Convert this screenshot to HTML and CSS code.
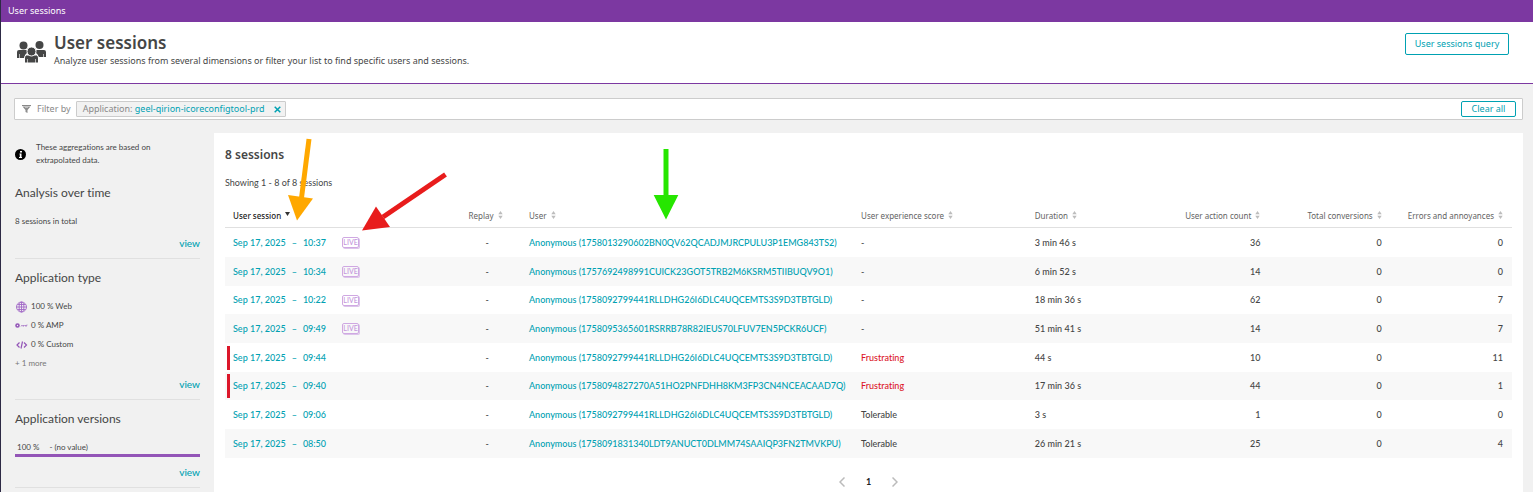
FILE: index.html
```html
<!DOCTYPE html>
<html lang="en">
<head>
<meta charset="utf-8">
<title>User sessions</title>
<link rel="stylesheet" href="styles.css">
</head>
<body>
<svg class="defs" aria-hidden="true">
  <symbol id="sort" viewBox="0 0 5 8"><path d="M2.500 0 4.700 3.200H.3zM2.500 8 .3 4.800h4.400z" fill="#bdbdbd"/></symbol>
</svg>
<nav class="crumbs"><span>User sessions</span></nav>
<header class="header">
  <svg class="people" viewBox="0 0 30 22" aria-hidden="true"><g fill="#454646"><circle cx="6.500" cy="4.500" r="4"/><circle cx="22.500" cy="4" r="4"/><path d="M0 17v-6q0-2 2-2h7q1 0 1 1v2q-2 1-2 3v2zM29 16v-5q0-2-2-2h-7q-1 0-1 1v2q2 1 2 3v1z"/><path d="M7.500 22v-5q0-3 2-3h10q2 0 2 3v5z" stroke="#fff"/><circle cx="14.500" cy="10.500" r="4.500" stroke="#fff"/></g><path d="M2.500 13v4M26.500 13v4M10.500 18v4M18.500 18v4" stroke="#fff" stroke-width=".6"/></svg>
  <div class="titles">
    <h1>User sessions</h1>
    <p>Analyze user sessions from several dimensions or filter your list to find specific users and sessions.</p>
  </div>
  <button class="btn btn-query" type="button">User sessions query</button>
</header>
<div class="filter">
  <svg class="funnel" viewBox="0 0 9 8" aria-hidden="true"><path d="M0 .5h9" stroke="#888"/><path d="M.5 1.500h8L5.500 5v3l-2-1V5z" fill="#8c8c8c"/><path d="M3 2.500h3" stroke="#ccc" stroke-width=".8"/></svg>
  <span class="filter-label">Filter by</span>
  <span class="chip"><span>Application: <b>geel-qirion-icoreconfigtool-prd</b></span>
    <button type="button" class="chip-close" aria-label="Remove filter"><svg viewBox="0 0 7 7"><path d="m.7.7 5.600 5.600M6.300.7.7 6.300" stroke="#00a1b2" stroke-width="1.500"/></svg></button></span>
  <button class="btn btn-clear" type="button">Clear all</button>
</div>
<main class="main">
  <aside class="side">
    <div class="note">
      <svg viewBox="0 0 11 11" aria-hidden="true"><circle cx="5.500" cy="5.500" r="5.500"/><path d="M5 2h2v1.500H5zM4.500 4.500h2V8H7v1H4V8h.8V5.500h-.3z" fill="#fff"/></svg>
      <p>These aggregations are based on extrapolated data.</p>
    </div>
    <section class="facet">
      <h2>Analysis over time</h2>
      <p class="total">8 sessions in total</p>
      <a class="view" href="#">view</a>
    </section>
    <section class="facet">
      <h2>Application type</h2>
      <ul class="types">
        <li><svg viewBox="0 0 12 12" aria-hidden="true"><g fill="none" stroke="#a169c6" stroke-width=".9"><circle cx="6.500" cy="6" r="5"/><ellipse cx="6.500" cy="6" rx="2.400" ry="5"/><path d="M6.500 1v10M1.500 6h10M2.500 3.500h8M2.500 8.500h8"/></g></svg>100 % Web</li>
        <li><svg viewBox="0 0 12 12" aria-hidden="true"><circle cx="2.500" cy="5.500" r="1.500" fill="none" stroke="#9355b7" stroke-width="1.600"/><path d="M6 6.500 7 5l1 1.500M8.500 6.500V5l1 1 1-1v1.500M11.500 6.500V5h1" fill="none" stroke="#a878c8" stroke-width=".8"/></svg>0 % AMP</li>
        <li><svg viewBox="0 0 12 12" aria-hidden="true"><path d="M4.500 3.500 2 6l2.500 2.500M9 3.500 11.500 6 9 8.500M7.500 2.500l-1.500 7" fill="none" stroke="#9355b7" stroke-width="1.200"/></svg>0 % Custom</li>
      </ul>
      <p class="more">+ 1 more</p>
      <a class="view" href="#">view</a>
    </section>
    <section class="facet">
      <h2>Application versions</h2>
      <p class="version"><span>100 %</span><span>- (no value)</span></p>
      <a class="view" href="#">view</a>
    </section>
  </aside>
  <section class="card">
    <h2>8 sessions</h2>
    <p class="showing">Showing 1 - 8 of 8 sessions</p>
    <table>
      <colgroup><col class="c-session"><col class="c-replay"><col class="c-user"><col class="c-score"><col class="c-num"><col class="c-num"><col class="c-num"><col class="c-num"></colgroup>
      <thead><tr>
        <th class="sorted">User session<svg class="sort" viewBox="0 0 5 8"><path d="M0 1h5L2.500 5z" fill="#333"/></svg></th>
        <th>Replay<svg class="sort"><use href="#sort"/></svg></th>
        <th>User<svg class="sort"><use href="#sort"/></svg></th>
        <th>User experience score<svg class="sort"><use href="#sort"/></svg></th>
        <th>Duration<svg class="sort"><use href="#sort"/></svg></th>
        <th class="num">User action count<svg class="sort"><use href="#sort"/></svg></th>
        <th class="num">Total conversions<svg class="sort"><use href="#sort"/></svg></th>
        <th class="num">Errors and annoyances<svg class="sort"><use href="#sort"/></svg></th>
      </tr></thead>
      <tbody>
        <tr><td><div class="session"><a class="when" href="#"><span>Sep 17, 2025</span><span>–</span><span>10:37</span></a><span class="live">LIVE</span></div></td><td class="replay">-</td><td><a href="#">Anonymous (1758013290602BN0QV62QCADJMJRCPULU3P1EMG843TS2)</a></td><td>-</td><td>3 min 46 s</td><td class="num">36</td><td class="num">0</td><td class="num">0</td></tr>
        <tr><td><div class="session"><a class="when" href="#"><span>Sep 17, 2025</span><span>–</span><span>10:34</span></a><span class="live">LIVE</span></div></td><td class="replay">-</td><td><a href="#">Anonymous (1757692498991CUICK23GOT5TRB2M6KSRM5TIIBUQV9O1)</a></td><td>-</td><td>6 min 52 s</td><td class="num">14</td><td class="num">0</td><td class="num">0</td></tr>
        <tr><td><div class="session"><a class="when" href="#"><span>Sep 17, 2025</span><span>–</span><span>10:22</span></a><span class="live">LIVE</span></div></td><td class="replay">-</td><td><a href="#">Anonymous (1758092799441RLLDHG26I6DLC4UQCEMTS3S9D3TBTGLD)</a></td><td>-</td><td>18 min 36 s</td><td class="num">62</td><td class="num">0</td><td class="num">7</td></tr>
        <tr><td><div class="session"><a class="when" href="#"><span>Sep 17, 2025</span><span>–</span><span>09:49</span></a><span class="live">LIVE</span></div></td><td class="replay">-</td><td><a href="#">Anonymous (1758095365601RSRRB78R82IEUS70LFUV7EN5PCKR6UCF)</a></td><td>-</td><td>51 min 41 s</td><td class="num">14</td><td class="num">0</td><td class="num">7</td></tr>
        <tr class="bad"><td><div class="session"><a class="when" href="#"><span>Sep 17, 2025</span><span>–</span><span>09:44</span></a></div></td><td class="replay">-</td><td><a href="#">Anonymous (1758092799441RLLDHG26I6DLC4UQCEMTS3S9D3TBTGLD)</a></td><td class="frustrating">Frustrating</td><td>44 s</td><td class="num">10</td><td class="num">0</td><td class="num">11</td></tr>
        <tr class="bad"><td><div class="session"><a class="when" href="#"><span>Sep 17, 2025</span><span>–</span><span>09:40</span></a></div></td><td class="replay">-</td><td><a href="#">Anonymous (1758094827270A51HO2PNFDHH8KM3FP3CN4NCEACAAD7Q)</a></td><td class="frustrating">Frustrating</td><td>17 min 36 s</td><td class="num">44</td><td class="num">0</td><td class="num">1</td></tr>
        <tr><td><div class="session"><a class="when" href="#"><span>Sep 17, 2025</span><span>–</span><span>09:06</span></a></div></td><td class="replay">-</td><td><a href="#">Anonymous (1758092799441RLLDHG26I6DLC4UQCEMTS3S9D3TBTGLD)</a></td><td>Tolerable</td><td>3 s</td><td class="num">1</td><td class="num">0</td><td class="num">0</td></tr>
        <tr><td><div class="session"><a class="when" href="#"><span>Sep 17, 2025</span><span>–</span><span>08:50</span></a></div></td><td class="replay">-</td><td><a href="#">Anonymous (1758091831340LDT9ANUCT0DLMM74SAAIQP3FN2TMVKPU)</a></td><td>Tolerable</td><td>26 min 21 s</td><td class="num">25</td><td class="num">0</td><td class="num">4</td></tr>
      </tbody>
    </table>
    <nav class="pager" aria-label="Pages">
      <button type="button" aria-label="Previous page"><svg viewBox="0 0 6 10"><path d="M5.500.5 1 5l4.500 4.500"/></svg></button>
      <span aria-current="page">1</span>
      <button type="button" aria-label="Next page"><svg viewBox="0 0 6 10"><path d="M.5.500 5 5 .5 9.500"/></svg></button>
    </nav>
  </section>
</main>
<svg class="arrow arrow-orange" viewBox="0 0 30 84" aria-hidden="true"><path d="M22 2 14.500 61" stroke="#ffa800" stroke-width="5"/><path d="m1 58 25 3.500L10 83.500z" fill="#ffa800"/></svg>
<svg class="arrow arrow-red" viewBox="0 0 90 62" aria-hidden="true"><path d="M85.500 4.500 23 47" stroke="#e81c1c" stroke-width="5"/><path d="m16 36.500 14 20.500L2 60.500z" fill="#e81c1c"/></svg>
<svg class="arrow arrow-green" viewBox="0 0 26 72" aria-hidden="true"><path d="M13 1v47" stroke="#26e600" stroke-width="5"/><path d="M.7 47h24.600L13 71.500z" fill="#26e600"/></svg>
</body>
</html>
```
FILE: styles.css
```css
* { box-sizing: border-box; }
body {
  margin: 0;
  min-height: 100vh;
  display: flex;
  flex-direction: column;
  position: relative;
  border-left: 1px solid #2d2a45;
  background: #f1f1f1;
  color: #454646;
  font: 500 9px/12px Lato, "Noto Sans", sans-serif;
  font-variant-ligatures: none;
}
h1, h2, p, ul { margin: 0; padding: 0; font-weight: 400; }
ul { list-style: none; }
a { color: #00a1b2; text-decoration: none; }
svg { flex: none; }
button { font: inherit; padding: 0; border: 0; background: none; cursor: pointer; }
.defs { position: absolute; width: 0; height: 0; }

.crumbs, .header, .filter, .card h2, th { font-family: "Noto Sans", sans-serif; font-weight: 400; }
.crumbs { height: 22px; padding: 0 7px; background: #7c38a1; color: #fff; line-height: 22px; }
.header {
  display: flex;
  align-items: flex-start;
  height: 62px;
  padding: 11px 24px 0 16px;
  background: #fff;
  border-bottom: 1px solid #7c38a1;
}
.people { width: 30px; height: 22px; margin: 8px 7px 0 0; }
.titles { flex: 1; }
.titles h1 { font-size: 17px; line-height: 20px; font-weight: 600; }
.titles p { line-height: 14px; margin-top: 1px; }
.btn { border: 1px solid #00a1b2; border-radius: 2px; background: #fff; color: #00a1b2; }
.btn-query { width: 104px; height: 22px; }
.btn-clear { width: 55px; height: 16px; margin-left: auto; line-height: 14px; }

.filter {
  display: flex;
  align-items: center;
  height: 22px;
  margin: 14px 10px 13px 13px;
  padding: 0 6px 0 7px;
  background: #fff;
  border: 1px solid #ccc;
  border-radius: 1px;
  color: #898989;
}
.funnel { width: 9px; height: 8px; margin-right: 6px; }
.filter-label { margin-right: 5px; }
.chip {
  display: flex;
  align-items: center;
  gap: 10px;
  height: 16px;
  padding: 0 4px 0 6px;
  background: #f2f2f2;
  border: 1px solid #ccc;
  border-radius: 1px;
}
.chip b { color: #00a1b2; font-weight: 400; }
.chip-close { display: flex; }
.chip-close svg { width: 7px; height: 7px; }

.main { display: flex; flex: 1; }
.side { width: 213px; flex: none; padding: 8px 14px 0; }
.note { display: flex; align-items: center; gap: 10px; margin-bottom: 16px; padding-right: 30px; line-height: 13px; }
.note svg { width: 11px; height: 11px; }
.note, .types, .more, .total, .version { font-size: 8px; }
.facet { display: flex; flex-direction: column; padding-bottom: 8px; margin-bottom: 9px; border-bottom: 1px solid #e0e0e0; }
.facet h2 { font-size: 12px; line-height: 20px; }
.total { margin: 11px 0 8px; line-height: 14px; }
.view { align-self: flex-end; font-size: 10px; line-height: 14px; }
.types { margin-top: 9px; }
.types li { display: flex; align-items: center; gap: 4px; line-height: 19px; height: 19px; }
.types svg { width: 12px; height: 12px; overflow: visible; }
.more { line-height: 18px; color: #777; margin-bottom: 5px; }
.version { display: flex; gap: 10px; margin: 11px 0 8px; padding: 0 2px; line-height: 14px; border-bottom: 3px solid #9355b7; }

.card { flex: 1; min-width: 0; margin-right: 10px; padding: 12px 11px 0; background: #fff; }
.card h2 { font-size: 12px; line-height: 20px; font-weight: 600; }
.showing { line-height: 14px; margin: 11px 0 15px; }
table { width: 100%; table-layout: fixed; border-collapse: separate; border-spacing: 0; }
.c-session { width: 18.3%; }
.c-replay { width: 4.7%; }
.c-user { width: 25.8%; }
.c-score { width: 13.5%; }
th, td { padding: 0 9px 0 8px; text-align: left; white-space: nowrap; }
th { height: 23px; font-size: 8px; color: #636363; border-bottom: 1px solid #e0e0e0; }
th.sorted { font-weight: 500; color: #222; }
th.num, td.num { text-align: right; }
.sort { width: 5px; height: 8px; margin-left: 4px; }
td { height: 29px; }
tr:nth-child(3n) td { height: 28px; }
tbody tr:nth-child(even) { background: #f8f8f8; }
td.replay { text-align: center; padding-right: 15px; }
.frustrating { color: #dc172a; }
.session { display: flex; align-items: center; }
.when { display: flex; gap: 6px; width: 109px; }
.live {
  width: 17px;
  height: 11px;
  border: 1px solid #cfa8e2;
  border-radius: 2px;
  box-shadow: 1px 1px 0 #dcc4ea;
  color: #c497dc;
  font-size: 7px;
  line-height: 9px;
  text-align: center;
}
.bad td:first-child { background: linear-gradient(#dc172a, #dc172a) 2px center / 3px 24px no-repeat; }
.pager { display: flex; justify-content: center; align-items: center; gap: 21px; padding: 18px 0 0; font-weight: 700; color: #222; }
.pager button { display: flex; }
.pager svg { width: 6px; height: 10px; fill: none; stroke: #bbb; stroke-width: 1.5; }

.arrow { position: absolute; pointer-events: none; }
.arrow-orange { left: 286px; top: 137px; width: 30px; height: 84px; }
.arrow-red { left: 359px; top: 170px; width: 90px; height: 62px; }
.arrow-green { left: 652px; top: 148px; width: 26px; height: 72px; }
```
